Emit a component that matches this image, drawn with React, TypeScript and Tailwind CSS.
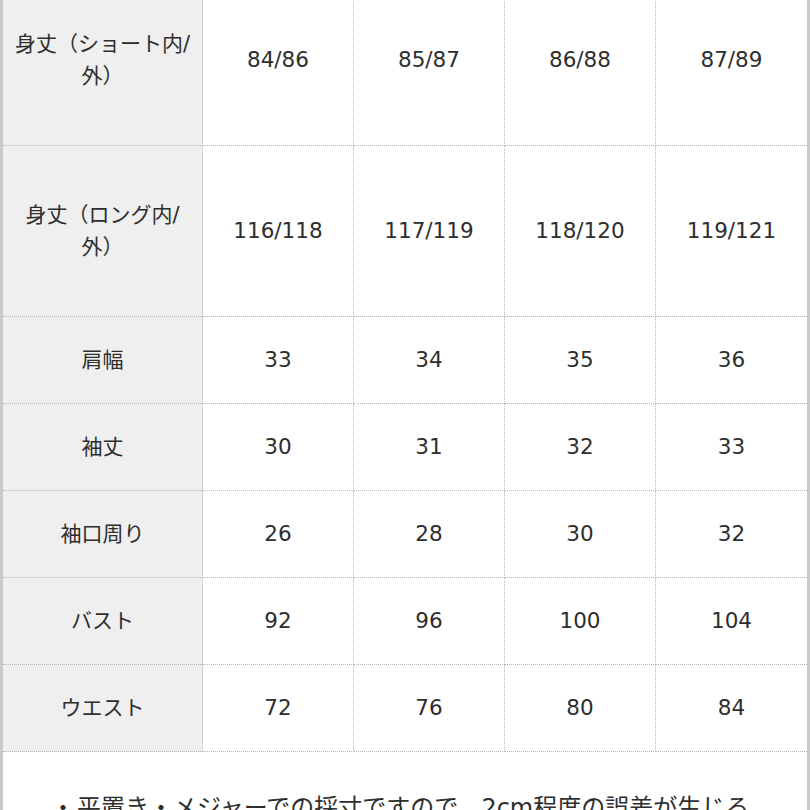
import React from "react";

const rows: { label: React.ReactNode; values: string[]; tall?: boolean }[] = [
    { label: <>身丈（ショート内/<br />外）</>, values: ["84/86", "85/87", "86/88", "87/89"], tall: true },
    { label: <>身丈（ロング内/<br />外）</>, values: ["116/118", "117/119", "118/120", "119/121"], tall: true },
    { label: "肩幅", values: ["33", "34", "35", "36"] },
    { label: "袖丈", values: ["30", "31", "32", "33"] },
    { label: "袖口周り", values: ["26", "28", "30", "32"] },
    { label: "バスト", values: ["92", "96", "100", "104"] },
    { label: "ウエスト", values: ["72", "76", "80", "84"] },
];

export default function App() {
    return (
        <div
            className="w-[810px] h-[810px] overflow-hidden bg-white text-[#2e2e2e]"
            style={{ fontFamily: '"DejaVu Sans", "Noto Sans CJK JP", sans-serif' }}
        >
            {/* scrolled down a little: the top of the first row is cut off */}
            <div className="-mt-[25px] border-x-[3px] border-[#c9c9c9] min-h-[900px]">
                <div className="grid grid-cols-[200px_151px_151px_151px_151px]">
                    {rows.map((r, i) => (
                        <React.Fragment key={i}>
                            <div
                                className={`flex items-center justify-center text-center bg-[#efefef] border-b border-r border-dotted border-[#b5b5b5] text-[21px] leading-[32px] px-2 ${r.tall ? "h-[171px]" : "h-[87px]"}`}
                            >
                                <span>{r.label}</span>
                            </div>
                            {r.values.map((v, j) => (
                                <div
                                    key={j}
                                    className={`flex items-center justify-center bg-white border-b border-dotted border-[#b5b5b5] text-[21.5px] ${j < 3 ? "border-r" : ""} ${r.tall ? "h-[171px]" : "h-[87px]"}`}
                                >
                                    {v}
                                </div>
                            ))}
                        </React.Fragment>
                    ))}
                </div>

                {/* note */}
                <div className="pt-[38px] pl-[48px] pr-4">
                    <p className="text-[24px] leading-[36px] whitespace-nowrap">
                        <span className="mr-[2px]">・</span>平置き・メジャーでの採寸ですので、2cm程度の誤差が生じる
                    </p>
                </div>
            </div>
        </div>
    );
}
